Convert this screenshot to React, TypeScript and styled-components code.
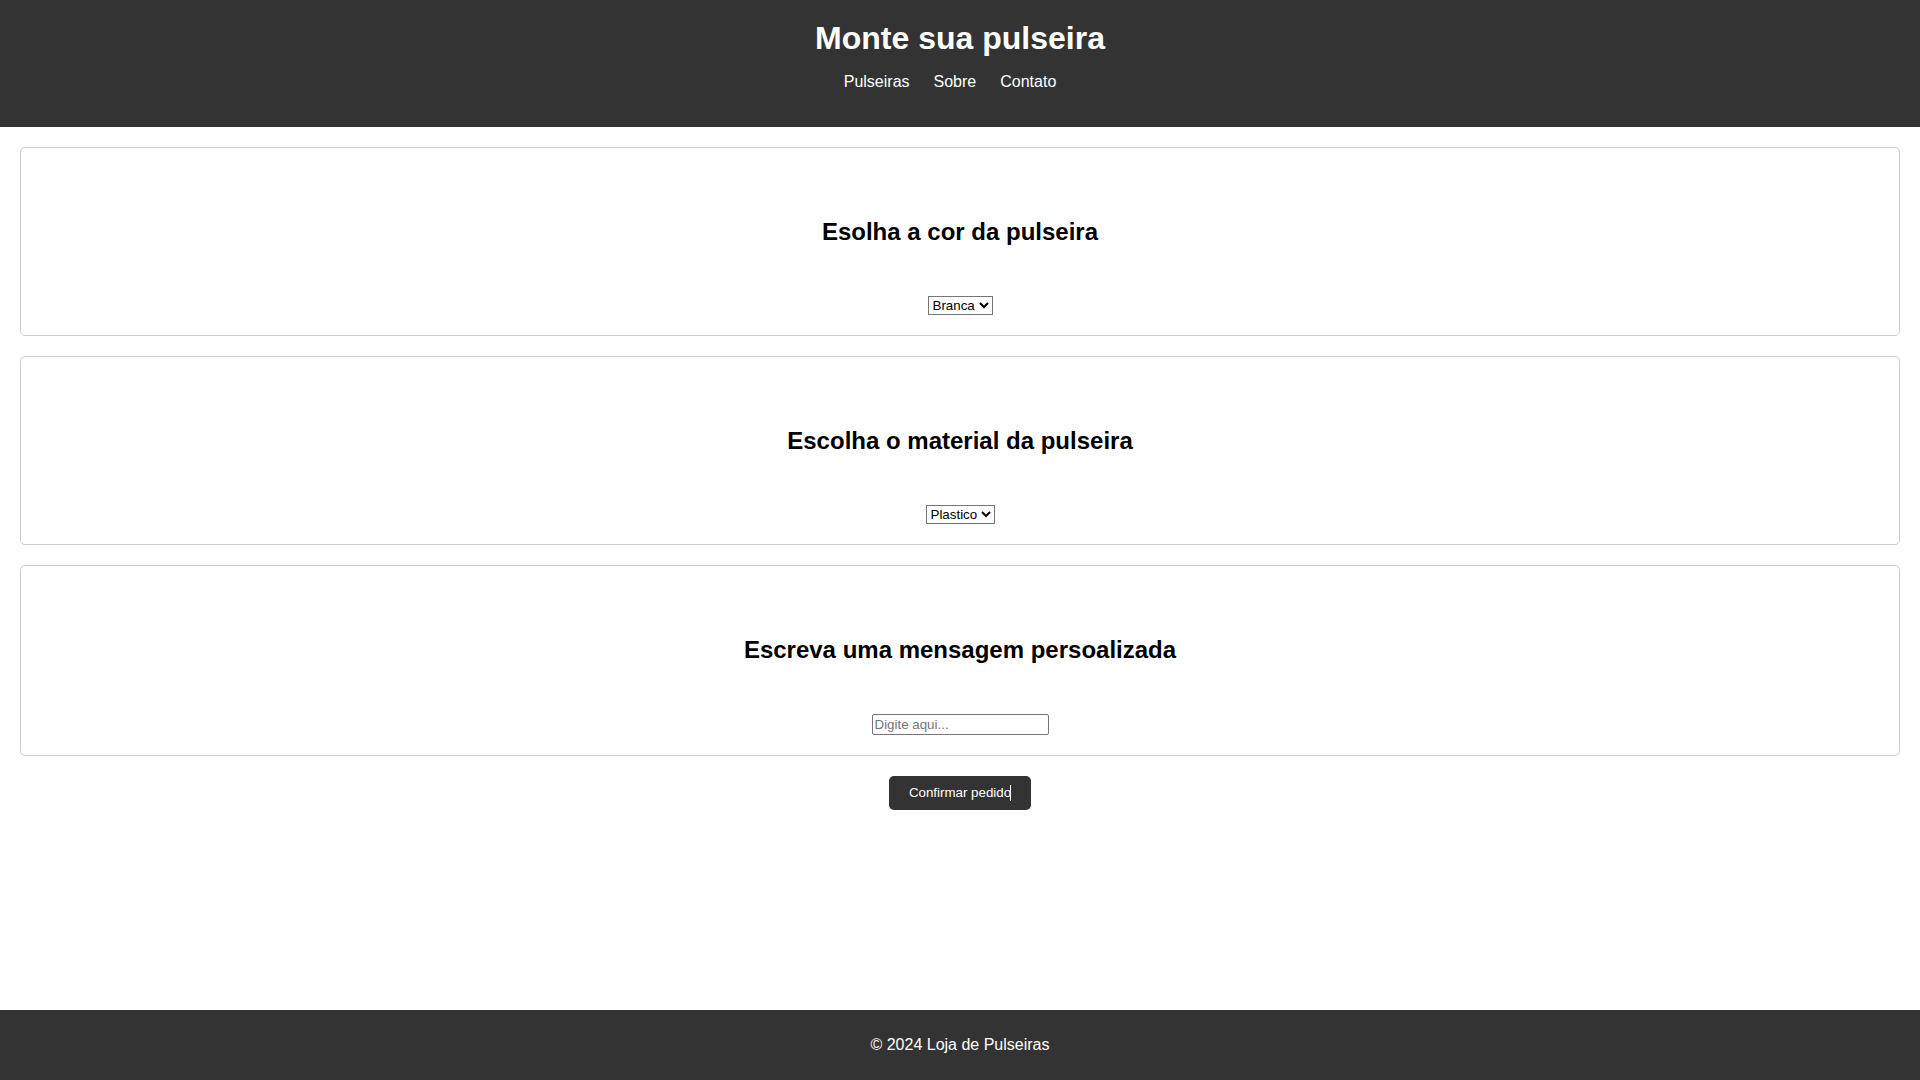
import React from "react";
import styled, { createGlobalStyle } from "styled-components";

const GlobalStyle = createGlobalStyle`
  html, body {
    margin: 0;
    padding: 0;
  }
  body {
    font-family: "Liberation Sans", Arial, sans-serif;
    color: #000;
    background: #fff;
  }
  #root {
    min-height: 100vh;
    display: flex;
    flex-direction: column;
  }
`;

const Header = styled.header`
  background: #333;
  color: #fff;
  text-align: center;
  padding: 20px 0 20px;
`;

const Title = styled.h1`
  margin: 0;
  font-size: 32px;
  font-weight: bold;
`;

const NavList = styled.ul`
  list-style: none;
  margin: 16px 0;
  padding: 0;
  display: flex;
  justify-content: center;
  gap: 4px;
  font-size: 16px;
`;

const NavItem = styled.li`
  margin-right: 20px;
`;

const NavLink = styled.a`
  color: #fff;
  text-decoration: none;
`;

const Main = styled.main`
  flex: 1;
  display: flex;
  flex-direction: column;
  gap: 20px;
  padding: 20px;
`;

const Card = styled.section`
  border: 1px solid #ccc;
  border-radius: 5px;
  padding: 70px 20px 20px;
  text-align: center;
`;

const CardTitle = styled.h2`
  margin: 0 0 50px;
  font-size: 24px;
  font-weight: bold;
`;

const Field = styled.div`
  display: flex;
  justify-content: center;
`;

const Select = styled.select`
  font-family: "Liberation Sans", Arial, sans-serif;
  font-size: 13.333px;
  color: #000;
  background: #fff;
`;

const TextInput = styled.input`
  box-sizing: border-box;
  width: 177px;
  height: 21px;
  font-family: "Liberation Sans", Arial, sans-serif;
  font-size: 13.333px;
  border: 1px solid #767676;
  border-radius: 2px;
  padding: 1px 2px;
  &::placeholder {
    color: #757575;
  }
`;

const Actions = styled.div`
  display: flex;
  justify-content: center;
`;

const ConfirmButton = styled.button`
  position: relative;
  background: #333;
  color: #fff;
  border: none;
  border-radius: 5px;
  padding: 10px 20px;
  font-family: "Liberation Sans", Arial, sans-serif;
  font-size: 13.333px;
  line-height: 14px;
  cursor: text;
`;

const Caret = styled.span`
  position: absolute;
  right: 20px;
  top: 9px;
  width: 1px;
  height: 16px;
  background: #fff;
`;

const Footer = styled.footer`
  background: #333;
  color: #fff;
  text-align: center;
  padding: 10px;
`;

const FooterText = styled.p`
  margin: 16px 0;
  font-size: 16px;
`;

export default function App() {
  return (
    <>
      <GlobalStyle />
      <Header>
        <Title>Monte sua pulseira</Title>
        <nav>
          <NavList>
            <NavItem>
              <NavLink href="#">Pulseiras</NavLink>
            </NavItem>
            <NavItem>
              <NavLink href="#">Sobre</NavLink>
            </NavItem>
            <NavItem>
              <NavLink href="#">Contato</NavLink>
            </NavItem>
          </NavList>
        </nav>
      </Header>
      <Main>
        <Card>
          <CardTitle>Esolha a cor da pulseira</CardTitle>
          <Field>
            <Select defaultValue="branca">
              <option value="branca">Branca</option>
              <option value="preta">Preta</option>
              <option value="azul">Azul</option>
            </Select>
          </Field>
        </Card>
        <Card>
          <CardTitle>Escolha o material da pulseira</CardTitle>
          <Field>
            <Select defaultValue="plastico">
              <option value="plastico">Plastico</option>
              <option value="couro">Couro</option>
              <option value="metal">Metal</option>
            </Select>
          </Field>
        </Card>
        <Card>
          <CardTitle>Escreva uma mensagem persoalizada</CardTitle>
          <Field>
            <TextInput type="text" placeholder="Digite aqui..." />
          </Field>
        </Card>
        <Actions>
          <ConfirmButton type="button">
            Confirmar pedido
            <Caret />
          </ConfirmButton>
        </Actions>
      </Main>
      <Footer>
        <FooterText>© 2024 Loja de Pulseiras</FooterText>
      </Footer>
    </>
  );
}
